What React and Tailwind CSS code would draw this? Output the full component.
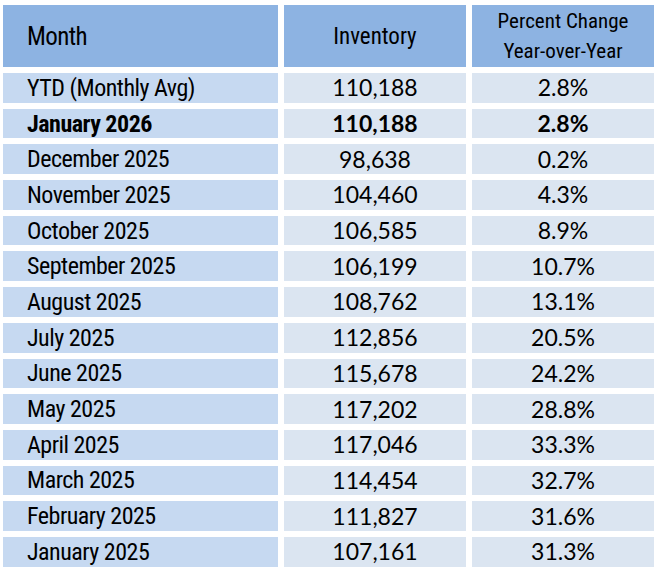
const rows = [
  { month: 'YTD (Monthly Avg)', inventory: '110,188', change: '2.8%' },
  { month: 'January 2026', inventory: '110,188', change: '2.8%', bold: true },
  { month: 'December 2025', inventory: '98,638', change: '0.2%' },
  { month: 'November 2025', inventory: '104,460', change: '4.3%' },
  { month: 'October 2025', inventory: '106,585', change: '8.9%' },
  { month: 'September 2025', inventory: '106,199', change: '10.7%' },
  { month: 'August 2025', inventory: '108,762', change: '13.1%' },
  { month: 'July 2025', inventory: '112,856', change: '20.5%' },
  { month: 'June 2025', inventory: '115,678', change: '24.2%' },
  { month: 'May 2025', inventory: '117,202', change: '28.8%' },
  { month: 'April 2025', inventory: '117,046', change: '33.3%' },
  { month: 'March 2025', inventory: '114,454', change: '32.7%' },
  { month: 'February 2025', inventory: '111,827', change: '31.6%' },
  { month: 'January 2025', inventory: '107,161', change: '31.3%' },
];

export default function App() {
  return (
    <div className="w-[658px] h-[571px] bg-white pt-[5px] pl-[3px] text-black">
      <div className="grid grid-cols-[275px_182px_182px] grid-rows-[62px_repeat(14,29.7px)] gap-[6px]">
        <div className="bg-[#8DB3E2] flex items-center pl-[24px] font-['Roboto_Condensed',sans-serif] text-[25px] tracking-[-0.6px] leading-none">
          Month
        </div>
        <div className="bg-[#8DB3E2] flex items-center justify-center font-['Roboto_Condensed',sans-serif] text-[23px] leading-none">
          Inventory
        </div>
        <div className="bg-[#8DB3E2] flex flex-col items-center justify-center font-['Roboto_Condensed',sans-serif] text-[21px] leading-[30px]">
          <span>Percent Change</span>
          <span>Year-over-Year</span>
        </div>

        {rows.map((r) => (
          <div key={r.month} className="contents">
            <div
              className={`bg-[#C6D9F1] flex items-center pl-[24px] font-['Roboto_Condensed',sans-serif] text-[24px] tracking-[-0.5px] leading-none ${r.bold ? 'font-bold' : ''}`}
            >
              {r.month}
            </div>
            <div
              className={`bg-[#DBE5F1] flex items-center justify-center font-['Lato',sans-serif] text-[23px] leading-none ${r.bold ? 'font-bold' : ''}`}
            >
              {r.inventory}
            </div>
            <div
              className={`bg-[#DBE5F1] flex items-center justify-center font-['Lato',sans-serif] text-[23px] leading-none ${r.bold ? 'font-bold' : ''}`}
            >
              {r.change}
            </div>
          </div>
        ))}
      </div>
    </div>
  );
}
